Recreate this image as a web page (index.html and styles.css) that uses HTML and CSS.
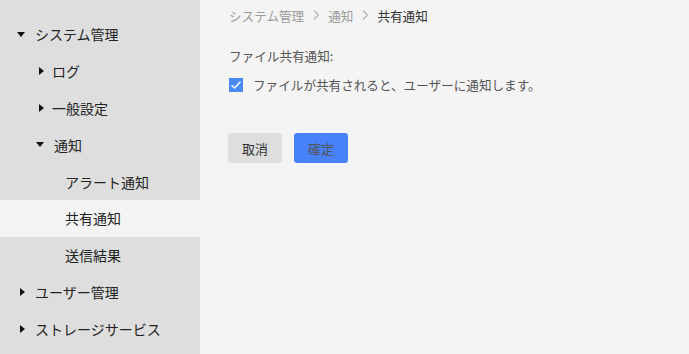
FILE: index.html
```html
<!DOCTYPE html>
<html lang="ja">
<head>
    <meta charset="UTF-8">
    <title>共有通知</title>
    <link rel="stylesheet" href="styles.css">
</head>
<body>
    <div class="layout">
        <!-- Sidebar -->
        <aside class="sidebar">
            <ul class="menu">
                <li class="item lv1 open"><span class="arrow down"></span>システム管理</li>
                <li class="item lv2"><span class="arrow right"></span>ログ</li>
                <li class="item lv2"><span class="arrow right"></span>一般設定</li>
                <li class="item lv2 open"><span class="arrow down"></span>通知</li>
                <li class="item lv3">アラート通知</li>
                <li class="item lv3 active">共有通知</li>
                <li class="item lv3">送信結果</li>
                <li class="item lv1"><span class="arrow right"></span>ユーザー管理</li>
                <li class="item lv1"><span class="arrow right"></span>ストレージサービス</li>
            </ul>
        </aside>

        <!-- Main -->
        <main class="content">
            <div class="breadcrumb">
                <span class="crumb">システム管理</span>
                <svg class="sep" width="8" height="12" viewBox="0 0 8 12"><path d="M2 1.5 L6.5 6 L2 10.5" fill="none" stroke="#b0b0b0" stroke-width="1.1"/></svg>
                <span class="crumb">通知</span>
                <svg class="sep" width="8" height="12" viewBox="0 0 8 12"><path d="M2 1.5 L6.5 6 L2 10.5" fill="none" stroke="#b0b0b0" stroke-width="1.1"/></svg>
                <span class="crumb current">共有通知</span>
            </div>

            <div class="field-label">ファイル共有通知:</div>
            <label class="check">
                <span class="box">
                    <svg width="14" height="14" viewBox="0 0 14 14"><path d="M2.6 7.2 L5.6 10 L11.4 3.8" fill="none" stroke="#fff" stroke-width="1.5"/></svg>
                </span>
                ファイルが共有されると、ユーザーに通知します。
            </label>

            <div class="actions">
                <button class="btn cancel">取消</button>
                <button class="btn ok">確定</button>
            </div>
        </main>
    </div>
</body>
</html>
```

FILE: styles.css
```css
body {
    margin: 0;
    font-family: "Noto Sans CJK JP", "Noto Sans", sans-serif;
    background-color: #f4f4f4;
    color: #333;
}

.layout {
    display: flex;
    height: 354px;
}

.sidebar {
    width: 200px;
    background-color: #dedede;
    padding-top: 16px;
}

.menu {
    list-style: none;
    margin: 0;
    padding: 0;
}

.item {
    height: 36.8px;
    display: flex;
    align-items: center;
    font-size: 14px;
    color: #222;
}

.item.lv1 {
    padding-left: 16px;
}

.item.lv2 {
    padding-left: 35px;
}

.item.lv3 {
    padding-left: 65px;
}

.item.active {
    background-color: #f4f4f4;
}

.arrow {
    width: 0;
    height: 0;
}

.arrow.down {
    border-left: 4px solid transparent;
    border-right: 4px solid transparent;
    border-top: 5px solid #111;
    margin-left: 1px;
    margin-right: 10px;
}

.arrow.right {
    border-top: 4px solid transparent;
    border-bottom: 4px solid transparent;
    border-left: 5px solid #111;
    margin-left: 4px;
    margin-right: 10px;
}

.item.lv2 .arrow.right {
    margin-right: 8px;
}

.content {
    flex: 1;
    padding: 5px 0 0 29px;
}

.breadcrumb {
    display: flex;
    align-items: center;
    height: 20px;
    font-size: 12.6px;
    color: #9a9a9a;
}

.sep {
    margin: 0 8px 0 8px;
}

.crumb.current {
    color: #333;
}

.field-label {
    margin-top: 22px;
    font-size: 12.6px;
    color: #555;
    line-height: 18px;
}

.check {
    display: flex;
    align-items: center;
    margin-top: 10px;
    font-size: 12.6px;
    color: #555;
}

.box {
    width: 14px;
    height: 14px;
    background-color: #4a8af5;
    margin-right: 10px;
    display: flex;
}

.actions {
    display: flex;
    gap: 12px;
    margin-top: 39px;
    margin-left: -1px;
}

.btn {
    width: 54px;
    height: 30px;
    border: none;
    border-radius: 3px;
    font-family: inherit;
    font-size: 13px;
    color: #555;
}

.btn.cancel {
    background-color: #dedede;
    color: #333;
}

.btn.ok {
    background-color: #4782fc;
}
```
